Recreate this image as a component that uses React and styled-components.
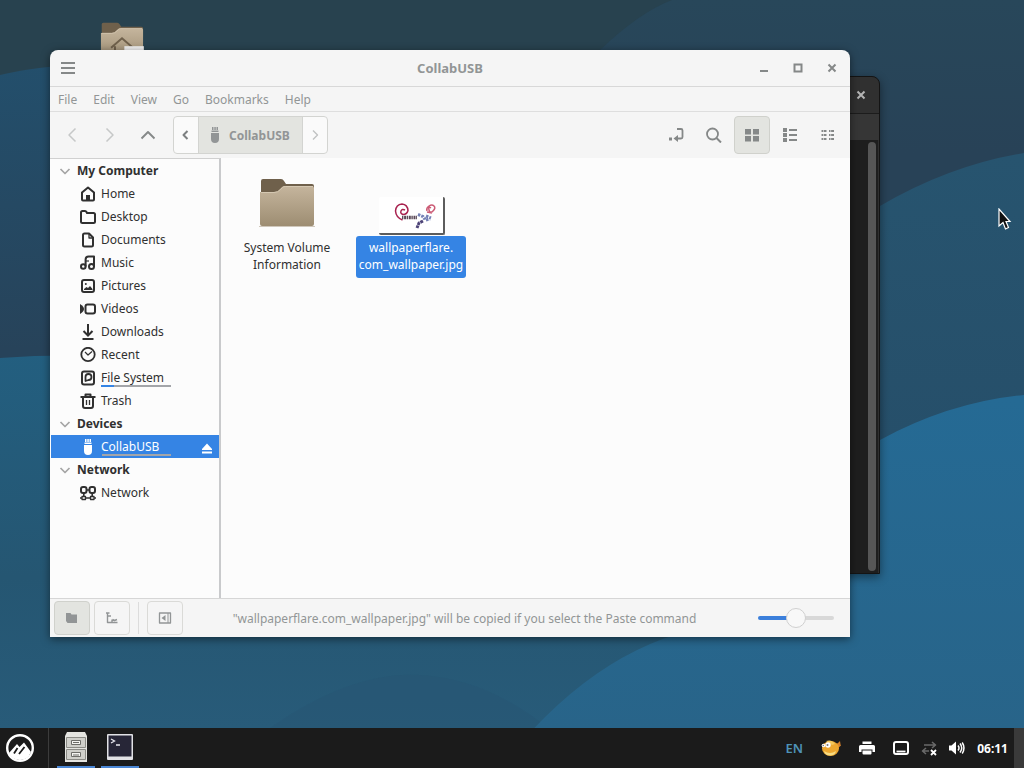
import React, { useState } from 'react'
import styled, { createGlobalStyle, css } from 'styled-components'

const GlobalStyle = createGlobalStyle`
    * {
        box-sizing: border-box;
    }
    body {
        margin: 0;
        font-family: "Noto Sans", "Open Sans", sans-serif;
        font-size: 12px;
        line-height: 17px;
        color: #303030;
    }
    button {
        font: inherit;
        color: inherit;
        background: none;
        border: 0;
        padding: 0;
    }
    svg {
        display: block;
        flex: none;
    }
`

/* ---------- icons ---------- */

function Icon({ size = 16, children, ...rest }) {
    return (
        <svg width={size} height={size} viewBox="0 0 16 16" fill="none" stroke="currentColor"
            strokeWidth="2" strokeLinejoin="round" aria-hidden="true" {...rest}>
            {children}
        </svg>
    )
}

const icons = {
    home: <><path d="M2 13.500V6.500L8 1.500l6 5v7q0 1-1 1H3q-1 0-1-1z" /><path d="M6 9h4v5H6z" fill="currentColor" stroke="none" /></>,
    desktop: <path d="M1 12.500v-9Q1 2 2.500 2H5q1 0 1.500 1L7 4h6.500Q15 4 15 5.500v7q0 1.500-1.500 1.500h-11Q1 14 1 12.500z" />,
    documents: <><path d="M3 3q0-1.500 1.500-1.500H9l4 4V13q0 1.500-1.500 1.500h-7Q3 14.500 3 13z" /><path d="M9 2v4h4" strokeWidth="1.300" /></>,
    music: <><circle cx="3.300" cy="11.500" r="2.300" /><circle cx="11.500" cy="11.500" r="2.500" /><path d="M5.600 11.500V4.500q0-3 3-3H14v10" /><path d="M6 6h3" strokeWidth="1.200" /></>,
    pictures: <><rect x="2" y="2" width="12" height="12" rx="2" /><path d="M4 12v-1l2.500-2 1.500 1 2-2 2.500 3v1z" fill="currentColor" stroke="none" /><circle cx="5.800" cy="6" r="1" fill="currentColor" stroke="none" /></>,
    videos: <><rect x="5.500" y="3.500" width="9.500" height="9" rx="2" /><path d="M0 3q4 2.500 4 5t-4 5z" fill="currentColor" stroke="none" /></>,
    downloads: <><path d="M8 0v11M3.500 7L8 11.500 12.500 7" strokeLinejoin="miter" /><path d="M2.500 15h11" /></>,
    recent: <><circle cx="8" cy="7.500" r="6.700" strokeWidth="1.800" /><path d="M5 5l3 3 4-3.500" strokeWidth="1.200" /></>,
    filesystem: <><rect x="2" y="1.500" width="12" height="13" rx="2" /><path d="M5.500 11V7A3 3 0 1 1 8.500 10z" strokeWidth="1.800" /></>,
    trash: <><path d="M0.500 4h15M3 4.500v8.500q0 2 2 2h6q2 0 2-2V4.500M5.500 4V1.500h5V4" /><path d="M6.500 7v5M9.500 7v5" strokeWidth="1.300" /></>,
    usb: <g fill="currentColor" stroke="none"><path d="M5 0h1.500v3H5zM7.300 0h1.500v3H7.300zM9.500 0H11v3H9.500zM4.500 3.500h7v1.500h-7zM4 6h8v6q0 4-4 4t-4-4z" /></g>,
    network: <><rect x="1" y="2" width="5.500" height="6" rx="2" /><rect x="9.500" y="2" width="5.500" height="6" rx="2" /><path d="M3.800 8v4M12.200 8v4M0 13h16M6.500 5h3" strokeWidth="1.600" /><path d="M2 11.500h3.500v3H2zM10.500 11.500H14v3h-3.500z" strokeWidth="1.300" fill="#fcfcfc" /></>,
    eject: <g fill="currentColor" stroke="none"><path d="M8 4.500L3 10v1h10v-1zM3 12.500h10v2H3z" /></g>,
    expander: <path d="M3.500 6L8 10.500 12.500 6" strokeWidth="1.700" />,
    back: <path d="M11.500 1.500L5 8l6.500 6.500" strokeWidth="1.500" />,
    forward: <path d="M4.500 1.500L11 8l-6.500 6.500" strokeWidth="1.500" />,
    up: <path d="M1.500 11.500L8 5l6.500 6.500" strokeWidth="1.900" />,
    pathBack: <path d="M9.500 4L5.500 8l4 4" />,
    pathForward: <path d="M6 3.500L10.500 8 6 12.500" strokeWidth="1.400" />,
    location: <><path d="M9 2h4q1.500 0 1.500 1.500V10q0 1.500-1.500 1.500H8" strokeWidth="1.800" /><path d="M10 8v7l-4.500-3.500z" fill="currentColor" stroke="none" /><path d="M1 10.500h3v3H1z" fill="currentColor" stroke="none" /></>,
    search: <><circle cx="6.500" cy="7" r="5.500" strokeWidth="1.800" /><path d="M10.500 11l4.500 4.500" /></>,
    grid: <path d="M1 2h6v5.500H1zM9 2h6v5.500H9zM1 9h6v5.500H1zM9 9h6v5.500H9z" fill="currentColor" stroke="none" />,
    list: <g fill="currentColor" stroke="none"><path d="M1 1h4v4H1zM1 6h4v4H1zM1 11h4v4H1zM7 2h8v2H7zM7 7h8v2H7zM7 12h8v2H7z" /></g>,
    compact: <path d="M1.500 4h5M1.500 8h5M1.500 12h5M9 4h5M9 8h5M9 12h5" strokeDasharray="1.500 .6 3 9" />,
    hamburger: <path d="M1 3h14M1 8h14M1 13h14" />,
    minimize: <path d="M4 11h8" />,
    maximize: <rect x="4.500" y="4.500" width="7" height="7" strokeLinejoin="miter" />,
    close: <path d="M4.500 4.500l7 7M11.500 4.500l-7 7" />,
    places: <path d="M2 3h4.500l1 1.500H13V13H3.500L2 11z" fill="currentColor" stroke="none" />,
    tree: <path d="M2 3h3.500M3.500 3v9.500H8M4 6h3M8 9.500v3h5.500M8.500 9.500l2 1 2.500-1" strokeWidth="1.400" />,
    sidebarHide: <><rect x="2.500" y="3" width="11" height="10" strokeWidth="1.300" /><path d="M11 3v10" strokeWidth="1" /><path d="M8.500 5v6L4.500 8z" fill="currentColor" stroke="none" /></>,
    printer: <g fill="currentColor" stroke="none"><path d="M3.500 1.500h9v2.500h-9zM1.500 5h13Q16 5 16 6.500V12h-2.500V9.500h-11V12H0V6.500Q0 5 1.500 5z" /><path d="M3.500 10.500h9v3q0 1-1 1h-7q-1 0-1-1z" /></g>,
    screen: <><rect x="1" y="2" width="14" height="12" rx="2" /><path d="M3.500 11.500h9" strokeWidth="1.800" /></>,
    netOff: <><path d="M3 5h11M11 2l3.500 3L11 8M8 11H2M5 8l-3.500 3L5 14" stroke="#6a6a6a" strokeWidth="1.600" /><path d="M10 10l5 5M15 10l-5 5" strokeWidth="1.800" /></>,
    volume: <><path d="M0 5.500h2.500L7 1.500v13l-4.500-4H0z" fill="currentColor" stroke="none" /><path d="M9 5.500q2 2.500 0 5M11 3.500q3.500 4.500 0 9M13.200 2.500q3.500 5.500 0 11" strokeWidth="1.500" /></>,
}

function FolderIcon({ home }) {
    return (
        <svg width={home ? 44 : 56} height={home ? 39 : 50} viewBox="0 0 56 50" aria-hidden="true">
            <defs>
                <linearGradient id="folderFront" x1="0" y1="0" x2="0" y2="1">
                    <stop offset="0" stopColor="#c5b59d" />
                    <stop offset="1" stopColor="#9d8d72" />
                </linearGradient>
            </defs>
            <path d="M2 20V3q0-2 2-2h18q2 0 3 2l2 3h26q2 0 2 2v12z" fill="#6f604b" />
            <path d="M1 14h14q4 0 6-3l2-2q1-1 3-1h27q2 0 2 2v36q0 2-2 2H3q-2 0-2-2z" fill="url(#folderFront)" />
            <path d="M2 14.500h13q4 0 6.500-3l2-2q1-1 3-1H54" fill="none" stroke="#d5c8b2" />
            <path d="M0 48.500h56" stroke="#cfc7bb" />
            {home && <>
                <path d="M14 33l14-12 14 12M19 31v13h20V31" fill="none" stroke="#6f604b" strokeWidth="2.500" />
                <path d="M31 31h25v8H31z" fill="#f2f2f2" />
            </>}
        </svg>
    )
}

function WallpaperThumb() {
    return (
        <svg width="64" height="36" viewBox="0 0 64 36" fill="none" aria-hidden="true">
            <path d="M26 13q-3-1.500-4 1t2 3.500q4 0 5-4-.5-6-6-6.500-6 .5-6.500 7 .5 6.500 7 9" stroke="#a8224f" strokeWidth="1.500" />
            <path d="M23 20.500h15" stroke="#5b4a58" strokeWidth="3.500" strokeDasharray="1.400 .7 2 .6" />
            <path d="M39 17.500l5 2 2 3M47 19l5 2M47 23l4-1" stroke="#7480b5" strokeWidth="3" strokeDasharray="2.500 1" />
            <path d="M44 24l-4 2-2 5" stroke="#4d4377" strokeWidth="3" strokeDasharray="3 .6" />
            <path d="M48 14q-1-3 2-5t5 0-1 5-4-1 2-2M48 15l5 1" stroke="#cc5c76" strokeWidth="1.500" />
        </svg>
    )
}

function Wallpaper() {
    return (
        <Backdrop viewBox="0 0 1024 768" preserveAspectRatio="none" aria-hidden="true">
            <defs>
                <linearGradient id="wpTop" x1="0" y1="0" x2="0" y2="1">
                    <stop offset="0" stopColor="#28475a" />
                    <stop offset="0.200" stopColor="#284257" />
                    <stop offset="1" stopColor="#284257" />
                </linearGradient>
                <linearGradient id="wpLeft" x1="0" y1="60" x2="0" y2="350" gradientUnits="userSpaceOnUse">
                    <stop offset="0" stopColor="#234f6c" />
                    <stop offset="1" stopColor="#27435a" />
                </linearGradient>
                <linearGradient id="wpMid" x1="0" y1="155" x2="0" y2="440" gradientUnits="userSpaceOnUse">
                    <stop offset="0" stopColor="#27546f" />
                    <stop offset="1" stopColor="#264f6a" />
                </linearGradient>
                <linearGradient id="wpLow" x1="0" y1="350" x2="0" y2="728" gradientUnits="userSpaceOnUse">
                    <stop offset="0" stopColor="#235f80" />
                    <stop offset="0.600" stopColor="#255672" />
                    <stop offset="1" stopColor="#285b79" />
                </linearGradient>
                <linearGradient id="wpRight" x1="0" y1="400" x2="0" y2="728" gradientUnits="userSpaceOnUse">
                    <stop offset="0" stopColor="#256a94" />
                    <stop offset="1" stopColor="#286489" />
                </linearGradient>
            </defs>
            <path d="M0 0h1024v768H0z" fill="url(#wpTop)" />
            <path d="M0 0h672Q640 12 600 50L0 76z" fill="#28424f" />
            <path d="M0 75Q60 60 200 62V400H0z" fill="url(#wpLeft)" />
            <path d="M700 420Q790 240 880 206 950 165 1024 153V500H700z" fill="url(#wpMid)" />
            <path d="M0 358Q180 345 400 400L880 500V768H0z" fill="url(#wpLow)" />
            <path d="M220 768Q330 670 420 675T590 768z" fill="#29536f" opacity="0.300" />
            <path d="M500 768Q600 640 720 625 790 500 880 440 950 402 1024 395V768z" fill="url(#wpRight)" />
        </Backdrop>
    )
}

/* ---------- data ---------- */

const menus = ['File', 'Edit', 'View', 'Go', 'Bookmarks', 'Help']

const places = [
    {
        title: 'My Computer',
        items: [
            { name: 'Home', icon: 'home' },
            { name: 'Desktop', icon: 'desktop' },
            { name: 'Documents', icon: 'documents' },
            { name: 'Music', icon: 'music' },
            { name: 'Pictures', icon: 'pictures' },
            { name: 'Videos', icon: 'videos' },
            { name: 'Downloads', icon: 'downloads' },
            { name: 'Recent', icon: 'recent' },
            { name: 'File System', icon: 'filesystem', used: 18 },
            { name: 'Trash', icon: 'trash' },
        ],
    },
    { title: 'Devices', items: [{ name: 'CollabUSB', icon: 'usb', used: 1, eject: true }] },
    { title: 'Network', items: [{ name: 'Network', icon: 'network' }] },
]

const views = [
    { id: 'grid', label: 'Icon view' },
    { id: 'list', label: 'List view' },
    { id: 'compact', label: 'Compact view' },
]

/* ---------- parts ---------- */

function Sidebar({ current, onSelect }) {
    return (
        <Side aria-label="Places">
            {places.map((group) => (
                <div key={group.title}>
                    <GroupTitle>
                        <Icon color="#a5a5a5">{icons.expander}</Icon>
                        {group.title}
                    </GroupTitle>
                    {group.items.map((item) => (
                        <PlaceRow key={item.name} $active={item.name === current}>
                            <PlaceButton onClick={() => onSelect(item.name)}>
                                <Icon>{icons[item.icon]}</Icon>
                                <PlaceName>
                                    {item.name}
                                    {item.used && <Usage><UsageFill style={{ width: `${item.used}%` }} /></Usage>}
                                </PlaceName>
                            </PlaceButton>
                            {item.eject && <button aria-label="Eject"><Icon>{icons.eject}</Icon></button>}
                        </PlaceRow>
                    ))}
                </div>
            ))}
        </Side>
    )
}

function FileManager() {
    const [place, setPlace] = useState('CollabUSB')
    const [view, setView] = useState('grid')
    const [zoom, setZoom] = useState(50)

    return (
        <Window>
            <TitleBar>
                <WindowButton aria-label="Menu"><Icon>{icons.hamburger}</Icon></WindowButton>
                <Title>CollabUSB</Title>
                <WindowControls>
                    <WindowButton aria-label="Minimize"><Icon>{icons.minimize}</Icon></WindowButton>
                    <WindowButton aria-label="Maximize"><Icon>{icons.maximize}</Icon></WindowButton>
                    <WindowButton aria-label="Close"><Icon>{icons.close}</Icon></WindowButton>
                </WindowControls>
            </TitleBar>
            <MenuBar>
                {menus.map((name) => <button key={name}>{name}</button>)}
            </MenuBar>
            <Toolbar>
                <ToolButton $dim aria-label="Back"><Icon>{icons.back}</Icon></ToolButton>
                <ToolButton $dim aria-label="Forward"><Icon>{icons.forward}</Icon></ToolButton>
                <ToolButton aria-label="Up"><Icon>{icons.up}</Icon></ToolButton>
                <PathBar>
                    <PathArrow aria-label="Scroll path left"><Icon>{icons.pathBack}</Icon></PathArrow>
                    <PathButton><Icon>{icons.usb}</Icon>CollabUSB</PathButton>
                    <PathArrow $dim aria-label="Scroll path right"><Icon>{icons.pathForward}</Icon></PathArrow>
                </PathBar>
                <Spacer />
                <ToolButton aria-label="Toggle location entry"><Icon>{icons.location}</Icon></ToolButton>
                <ToolButton aria-label="Search"><Icon>{icons.search}</Icon></ToolButton>
                {views.map((v) => (
                    <ToolButton key={v.id} aria-label={v.label} $active={v.id === view} onClick={() => setView(v.id)}>
                        <Icon>{icons[v.id]}</Icon>
                    </ToolButton>
                ))}
            </Toolbar>
            <Body>
                <Sidebar current={place} onSelect={setPlace} />
                <Files>
                    <FileItem>
                        <FileArt><FolderIcon /></FileArt>
                        <FileLabel>System Volume Information</FileLabel>
                    </FileItem>
                    <FileItem>
                        <FileArt $thumb><Thumb><WallpaperThumb /></Thumb></FileArt>
                        <FileLabel $selected>wallpaperflare.<br />com_wallpaper.jpg</FileLabel>
                    </FileItem>
                </Files>
            </Body>
            <StatusBar>
                <StatusButton $active aria-label="Places"><Icon>{icons.places}</Icon></StatusButton>
                <StatusButton aria-label="Tree"><Icon>{icons.tree}</Icon></StatusButton>
                <Divider />
                <StatusButton aria-label="Hide sidebar"><Icon>{icons.sidebarHide}</Icon></StatusButton>
                <StatusText>"wallpaperflare.com_wallpaper.jpg" will be copied if you select the Paste command</StatusText>
                <ZoomSlider type="range" aria-label="Zoom" value={zoom} style={{ '--fill': `${zoom}%` }}
                    onChange={(e) => setZoom(e.target.value)} />
            </StatusBar>
        </Window>
    )
}

function Panel() {
    return (
        <PanelBar>
            <MenuButton aria-label="Menu">
                <svg width="28" height="28" viewBox="0 0 28 28" aria-hidden="true">
                    <circle cx="14" cy="14" r="12.800" fill="none" stroke="#fff" strokeWidth="2.400" />
                    <path d="M3 19l8-9 2.500 3L18 8.500 25 18q-3 8-11 8T3 19z" fill="#fff" />
                    <path d="M8 19.500l3.500-5.500M13 20l5.500-7" stroke="#1b1b1b" strokeWidth="1.800" fill="none" />
                </svg>
            </MenuButton>
            <TaskButton aria-label="Files">
                <svg width="24" height="32" viewBox="0 0 24 32" aria-hidden="true">
                    <path d="M3 1h18l2 4v26H1V5z" fill="#e4e4e0" />
                    <path d="M2.500 6.500h19v10h-19zM2.500 18.500h19v10h-19z" fill="#cfcfca" stroke="#8b8b86" />
                    <path d="M7.500 9.500h9v4h-9zM7.500 21.500h9v4h-9z" fill="#f3f3f0" stroke="#6d6d69" />
                    <path d="M9 11.500h6M9 24h6" stroke="#6d6d69" />
                </svg>
            </TaskButton>
            <TaskButton aria-label="Terminal">
                <svg width="26" height="28" viewBox="0 0 26 28" aria-hidden="true">
                    <rect y="1" width="26" height="26" rx="1" fill="#e2e2e6" />
                    <rect x="1.500" y="2.500" width="23" height="21" fill="#272637" />
                    <path d="M4 6l3.500 2L4 10M9 12h4" stroke="#e8e8ee" strokeWidth="1.300" fill="none" />
                </svg>
            </TaskButton>
            <Spacer />
            <Tray>
                <Layout>EN</Layout>
                <svg width="20" height="18" viewBox="0 0 20 18" aria-hidden="true">
                    <path d="M14 6l3-2 2-2 .5 3.500.5 1-3.500 3z" fill="#d7822b" />
                    <ellipse cx="9.500" cy="9.500" rx="8.500" ry="7.500" fill="#eda72f" />
                    <path d="M3 12q6 4 12 0-1 4.500-6 4.500T3 12z" fill="#f8dc82" />
                    <path d="M5 2q6-2 9 3l-3 1z" fill="#f4c75c" />
                    <circle cx="7" cy="6" r="2.700" fill="#fff" />
                    <circle cx="2.500" cy="6.500" r="1.800" fill="#fff" />
                    <circle cx="6.500" cy="6" r="1" fill="#777" />
                    <circle cx="2.300" cy="6.500" r=".8" fill="#777" />
                </svg>
                <Icon>{icons.printer}</Icon>
                <Icon>{icons.screen}</Icon>
            </Tray>
            <Tray $tight>
                <Icon>{icons.netOff}</Icon>
                <Icon>{icons.volume}</Icon>
                <Clock>06:11</Clock>
            </Tray>
            <ShowDesktop aria-label="Show desktop" />
        </PanelBar>
    )
}

function App() {
    return (
        <Screen>
            <GlobalStyle />
            <Wallpaper />
            <Workspace>
                <HomeShortcut><FolderIcon home /></HomeShortcut>
                <Terminal>
                    <TerminalTitle>
                        <button aria-label="Close terminal"><Icon>{icons.close}</Icon></button>
                    </TerminalTitle>
                    <TerminalMenu />
                    <TerminalBody><ScrollThumb /></TerminalBody>
                </Terminal>
                <FileManager />
            </Workspace>
            <Panel />
            <Cursor width="14" height="22" viewBox="0 0 14 22" aria-hidden="true">
                <path d="M1 1v17l4-3.500L7.500 21l3-1.500-2.500-6H12z" fill="#111" stroke="#fff" strokeWidth="1.200" />
            </Cursor>
        </Screen>
    )
}

/* ---------- desktop ---------- */

const Screen = styled.div`
    position: relative;
    display: flex;
    flex-direction: column;
    height: 100vh;
    overflow: hidden;
    background: #28475a;
`

const Backdrop = styled.svg`
    position: absolute;
    inset: 0;
    width: 100%;
    height: 100%;
`

const Workspace = styled.main`
    position: relative;
    flex: 1;
`

const HomeShortcut = styled.div`
    position: absolute;
    left: 100px;
    top: 22px;
`

const Cursor = styled.svg`
    position: absolute;
    right: 12px;
    top: 208px;
`

const Terminal = styled.section`
    position: absolute;
    left: 80px;
    right: 144px;
    top: 76px;
    bottom: 154px;
    display: flex;
    flex-direction: column;
    background: #1e1e1e;
    border: 1px solid #141414;
    border-radius: 8px 8px 0 0;
    box-shadow: 0 3px 10px rgba(0, 0, 0, 0.45);
    overflow: hidden;
`

const TerminalTitle = styled.div`
    display: flex;
    align-items: center;
    justify-content: flex-end;
    height: 37px;
    padding-right: 10px;
    background: #303030;
    color: #b4b4b4;
    border-bottom: 1px solid #1c1c1c;
`

const TerminalMenu = styled.div`
    height: 26px;
    background: #363636;
`

const TerminalBody = styled.div`
    flex: 1;
    display: flex;
    justify-content: flex-end;
    padding: 2px;
    border-right: 1px solid #303030;
`

const ScrollThumb = styled.div`
    width: 8px;
    border-radius: 4px;
    background: #565656;
`

/* ---------- window ---------- */

const Window = styled.section`
    position: absolute;
    left: 50px;
    right: 174px;
    top: 50px;
    bottom: 91px;
    display: flex;
    flex-direction: column;
    background: #f5f5f5;
    color: #929596;
    border-radius: 8px 8px 0 0;
    box-shadow: 0 2px 8px rgba(0, 0, 0, 0.5);
    overflow: hidden;
`

const TitleBar = styled.header`
    display: grid;
    grid-template-columns: 1fr auto 1fr;
    align-items: center;
    height: 37px;
    padding: 0 1px;
    border-bottom: 1px solid #d8d8d8;
`

const Title = styled.h1`
    margin: 0;
    font-size: 13px;
    font-weight: 700;
`

const WindowControls = styled.div`
    display: flex;
    justify-content: flex-end;
`

const WindowButton = styled.button`
    display: grid;
    place-items: center;
    width: 34px;
    height: 34px;
    color: #858888;
`

const MenuBar = styled.nav`
    display: flex;
    align-items: center;
    gap: 16px;
    height: 25px;
    padding: 0 8px;
    border-bottom: 1px solid #dedede;
`

const Toolbar = styled.div`
    display: flex;
    align-items: center;
    gap: 2px;
    height: 46px;
    padding: 0 4px;
`

const pressed = css`
    background: #e3e4e0;
    border-color: #d0d1cc;
`

const ToolButton = styled.button`
    display: grid;
    place-items: center;
    width: 36px;
    height: 38px;
    border: 1px solid transparent;
    border-radius: 4px;
    color: ${(props) => (props.$dim ? '#c6c8c8' : '#858888')};
    ${(props) => props.$active && pressed}
`

const PathBar = styled.div`
    display: flex;
    height: 38px;
    margin-left: 5px;
    border: 1px solid #d3d4d1;
    border-radius: 4px;
    background: #fafafa;
`

const PathArrow = styled.button`
    display: grid;
    place-items: center;
    width: 24px;
    color: ${(props) => (props.$dim ? '#c0c2c2' : '#7c7f80')};
`

const PathButton = styled.button`
    display: flex;
    align-items: center;
    gap: 6px;
    padding: 0 12px 0 8px;
    font-weight: 700;
    background: #e3e4e0;
    border: solid #d3d4d1;
    border-width: 0 1px;
`

const Spacer = styled.div`
    flex: 1;
`

const Body = styled.div`
    flex: 1;
    display: flex;
    min-height: 0;
    background: #fcfcfc;
    color: #303030;
`

/* ---------- sidebar ---------- */

const Side = styled.nav`
    width: 171px;
    padding-left: 1px;
    border-top: 1px solid #d0d0d0;
    border-right: 2px solid #c9cacc;
`

const GroupTitle = styled.div`
    display: flex;
    align-items: center;
    gap: 4px;
    height: 23px;
    padding-left: 6px;
    font-weight: 700;
`

const PlaceRow = styled.div`
    display: flex;
    align-items: center;
    height: 23px;
    padding: 0 4px 0 29px;
    ${(props) => props.$active && css`
        background: #3584e4;
        color: #fff;
    `}
`

const PlaceButton = styled.button`
    flex: 1;
    display: flex;
    align-items: center;
    gap: 5px;
    text-align: left;
`

const PlaceName = styled.span`
    position: relative;
    width: 70px;
`

const Usage = styled.span`
    position: absolute;
    left: 0;
    bottom: -1px;
    width: 100%;
    height: 2px;
    background: #a3a5a9;
`

const UsageFill = styled.span`
    display: block;
    height: 100%;
    background: #3584e4;
`

/* ---------- files ---------- */

const Files = styled.div`
    flex: 1;
    display: flex;
    align-items: flex-start;
    gap: 14px;
    padding: 12px 11px;
`

const FileItem = styled.div`
    width: 110px;
    text-align: center;
`

const FileArt = styled.div`
    display: flex;
    align-items: flex-end;
    justify-content: center;
    height: 66px;
    padding-bottom: ${(props) => (props.$thumb ? 1 : 8)}px;
`

const Thumb = styled.div`
    margin-left: 2px;
    background: #fff;
    border: solid #5c5c5c;
    border-width: 0 2px 2px 0;
    border-radius: 2px;
`

const FileLabel = styled.div`
    padding: 3px 2px 5px;
    border-radius: 3px;
    ${(props) => props.$selected && css`
        background: #3584e4;
        color: #fff;
    `}
`

/* ---------- status bar ---------- */

const StatusBar = styled.footer`
    display: flex;
    align-items: center;
    gap: 4px;
    height: 39px;
    padding: 0 16px 0 4px;
    border-top: 1px solid #d6d6d6;
`

const StatusButton = styled.button`
    display: grid;
    place-items: center;
    width: 36px;
    height: 34px;
    border: 1px solid #dadad7;
    border-radius: 4px;
    ${(props) => props.$active && pressed}
`

const Divider = styled.div`
    width: 1px;
    height: 32px;
    margin: 0 4px;
    background: #dcdcdc;
`

const StatusText = styled.p`
    flex: 1;
    margin: 0;
    padding-right: 12px;
    text-align: center;
    white-space: nowrap;
`

const ZoomSlider = styled.input`
    appearance: none;
    width: 76px;
    height: 20px;
    margin: 0;
    background: none;
    &::-webkit-slider-runnable-track {
        height: 4px;
        border-radius: 2px;
        background: linear-gradient(to right, #3b7fdb var(--fill), #d8d8d8 var(--fill));
    }
    &::-webkit-slider-thumb {
        appearance: none;
        width: 20px;
        height: 20px;
        margin-top: -8px;
        border: 1px solid #d0d0d0;
        border-radius: 50%;
        background: #f8f8f8;
    }
`

/* ---------- panel ---------- */

const PanelBar = styled.footer`
    position: relative;
    display: flex;
    height: 40px;
    background: #1b1b1b;
    color: #fff;
`

const MenuButton = styled.button`
    display: grid;
    place-items: center;
    width: 49px;
    padding-right: 8px;
    margin-right: 8px;
    border-right: 1px solid #3c3c3c;
`

const TaskButton = styled.button`
    display: grid;
    place-items: center;
    width: 38px;
    margin-right: 6px;
    border-bottom: 2px solid #4a86d4;
`

const Tray = styled.div`
    display: flex;
    align-items: center;
    gap: ${(props) => (props.$tight ? 12 : 18)}px;
    margin-left: 12px;
`

const Layout = styled.span`
    font-size: 13px;
    font-weight: 600;
    color: #4f93b8;
`

const Clock = styled.time`
    font-weight: 700;
`

const ShowDesktop = styled.button`
    width: 10px;
    margin-left: 6px;
    background: #3a3a3a;
`

export default App
